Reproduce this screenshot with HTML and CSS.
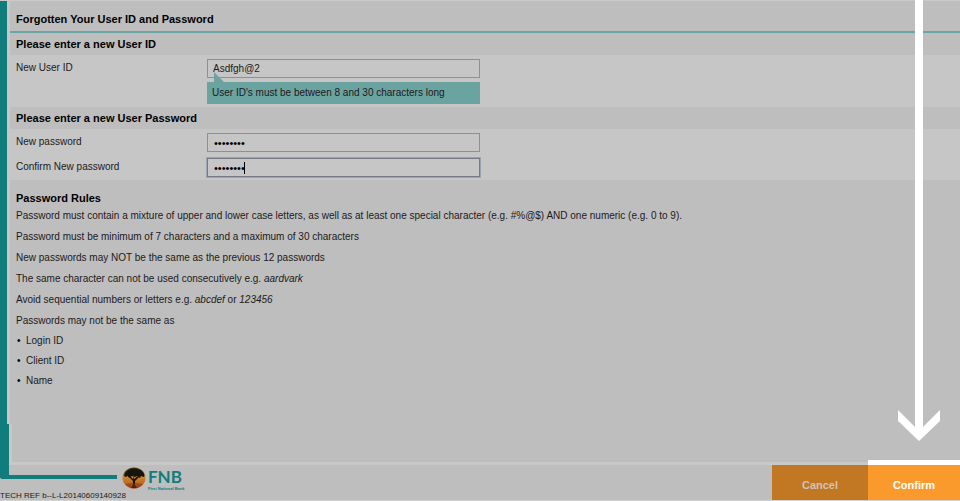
FILE: index.html
```html
<!doctype html>
<html lang="en">
<head>
    <meta charset="UTF-8">
    <meta name="viewport" content="width=device-width, initial-scale=1.0">
    <title>Forgotten Your User ID and Password</title>
    <link rel="stylesheet" href="styles.css">
</head>
<body>
<form class="page">
    <div class="body">
        <div class="rail">
            <div class="rail-top"></div>
            <div class="rail-bottom"></div>
        </div>
        <main class="main">
            <h1 class="title">Forgotten Your User ID and Password</h1>
            <h2 class="heading">Please enter a new User ID</h2>
            <div class="fields">
                <div class="row">
                    <label for="userid">New User ID</label>
                    <div class="control">
                        <input type="text" id="userid" value="Asdfgh@2">
                        <div class="tip">User ID's must be between 8 and 30 characters long</div>
                    </div>
                </div>
            </div>
            <h2 class="heading">Please enter a new User Password</h2>
            <div class="fields">
                <div class="row">
                    <label for="password">New password</label>
                    <div class="control"><input type="password" id="password" value="password"></div>
                </div>
                <div class="row">
                    <label for="confirm">Confirm New password</label>
                    <div class="control active">
                        <input type="password" id="confirm" value="password">
                        <span class="caret"></span>
                    </div>
                </div>
            </div>
            <section class="rules">
                <h3>Password Rules</h3>
                <p>Password must contain a mixture of upper and lower case letters, as well as at least one special character (e.g. #%@$) AND one numeric (e.g. 0 to 9).</p>
                <p>Password must be minimum of 7 characters and a maximum of 30 characters</p>
                <p>New passwords may NOT be the same as the previous 12 passwords</p>
                <p>The same character can not be used consecutively e.g. <em>aardvark</em></p>
                <p>Avoid sequential numbers or letters e.g. <em>abcdef</em> or <em>123456</em></p>
                <p>Passwords may not be the same as</p>
                <ul>
                    <li>Login ID</li>
                    <li>Client ID</li>
                    <li>Name</li>
                </ul>
            </section>
        </main>
    </div>
    <footer class="footer">
        <div class="brand">
            <div class="brand-row">
                <div class="corner"></div>
                <svg class="tree" viewBox="0 0 24 22">
                    <defs>
                        <linearGradient id="sky" x1="0" y1="0" x2="0" y2="1">
                            <stop offset="0" stop-color="#54401c"/>
                            <stop offset=".45" stop-color="#c8892c"/>
                            <stop offset="1" stop-color="#b84f1c"/>
                        </linearGradient>
                    </defs>
                    <ellipse cx="12" cy="11" rx="11.5" ry="10.5" fill="url(#sky)"/>
                    <path d="M2 8C3 5 5 3 8 2C12 0 18 2 20 4C22 6 23 8 22 10L19 9L18 11L15 9L13 10L10 9L7 11L6 9L3 10Z" fill="#17150f"/>
                    <path d="M6 9L11 14L11 18L9 21L15 21L13 18L13 14L18 9L16 9L12 12L12 9L11 12L8 9Z" fill="#17150f"/>
                    <path d="M3 17Q12 15 21 17Q17 21 12 21.500Q7 21 3 17Z" fill="#7d3217" opacity=".5"/>
                </svg>
                <div class="name">
                    <strong>FNB</strong>
                    <small>First National Bank</small>
                </div>
            </div>
            <div class="ref">TECH REF b--L-L20140609140928</div>
        </div>
        <div class="actions">
            <button type="button" class="cancel">Cancel</button>
            <button type="button" class="confirm">Confirm</button>
        </div>
    </footer>
    <div class="arrow">
        <div class="shaft"></div>
        <svg viewBox="0 0 42 31"><path d="M0 0L17 17V0H25V17L42 0V11L21 31L0 11Z" fill="#fff"/></svg>
    </div>
</form>
</body>
</html>
```
FILE: styles.css
```css
* {
    box-sizing: border-box;
}

body {
    margin: 0;
    background: #bebebe;
    color: #1c1a20;
    font: 10px/14px "Liberation Sans", Arial, sans-serif;
}

h1, h2, h3, p, ul {
    margin: 0;
}

.page {
    position: relative;
    display: flex;
    flex-direction: column;
    min-height: 100vh;
    border-top: 1px solid #cacaca;
    border-bottom: 1px solid #d2d2d2;
}

.body {
    display: flex;
    flex: 1;
    border-bottom: 3px solid #c8c8c8;
}

/* teal rail down the left side */
.rail {
    display: flex;
    flex-direction: column;
    width: 10px;
    margin-bottom: -3px;
    background: #c8c8c8;
}

.rail-top {
    flex: 1;
    width: 7px;
    background: #107c7c;
}

.rail-bottom {
    width: 9px;
    height: 41px;
    background: #107c7c;
    box-shadow: 3px 0 #c8c8c8;
}

.main {
    flex: 1;
}

.title {
    height: 32px;
    padding: 10px 6px 0;
    border-bottom: 2px solid #6aa5a3;
    color: #000;
    font-size: 11px;
    line-height: 16px;
}

.heading {
    padding: 3px 6px;
    color: #000;
    font-size: 11px;
    line-height: 16px;
}

.fields {
    display: flex;
    flex-direction: column;
    gap: 6px;
    padding: 4px 6px 3px;
    background: #c6c6c6;
}

.row {
    display: flex;
}

.row label {
    width: 191px;
    padding-top: 2px;
}

.control {
    position: relative;
    width: 273px;
}

.control input {
    display: block;
    width: 100%;
    height: 19px;
    padding: 0 5px;
    border: 1px solid #6f9f9b;
    border-radius: 0;
    outline: 0;
    background: #c6c6c6;
    color: #1c1a20;
    font: inherit;
}

.control input[type="password"] {
    padding: 0 6px;
    color: #000;
    font-size: 11px;
}

.control.active input {
    border-color: #777b83;
    box-shadow: 0 0 0 1px #9aa4b1;
}

.caret {
    position: absolute;
    top: 4px;
    left: 37px;
    width: 1px;
    height: 12px;
    background: #000;
}

.tip {
    position: relative;
    margin-top: 4px;
    padding: 4px 5px;
    background: #6ba3a1;
}

.tip::before {
    content: "";
    position: absolute;
    top: -10px;
    left: 7px;
    border-left: 10px solid #6ba3a1;
    border-top: 10px solid transparent;
}

.rules {
    padding: 11px 6px;
}

.rules h3 {
    color: #000;
    font-size: 11px;
}

.rules p {
    padding: 3px 0;
    line-height: 15px;
}

.rules ul {
    padding-left: 10px;
}

.rules li {
    padding: 3px 0;
}

.rules li::marker {
    content: "•\00a0\00a0";
    color: #000;
}

.footer {
    display: flex;
    justify-content: space-between;
    height: 35px;
}

.brand-row {
    display: flex;
    height: 26px;
}

.corner {
    width: 117px;
    height: 14px;
    border-left: 9px solid #107c7c;
    border-bottom: 4px solid #107c7c;
    border-bottom-left-radius: 3px;
}

.tree {
    width: 24px;
    height: 22px;
    margin: 2px 2px 0 5px;
}

.name {
    color: #107c7c;
}

.name strong {
    display: block;
    padding-top: 2px;
    font: bold 17px/20px Lato, sans-serif;
}

.name small {
    display: block;
    font-size: 4px;
    font-weight: bold;
    line-height: 4px;
}

.ref {
    font-size: 8px;
    line-height: 9px;
}

.actions {
    display: flex;
}

.actions button {
    width: 96px;
    padding: 4px 0 0;
    border: 0;
    font: bold 11px/14px "Liberation Sans", Arial, sans-serif;
}

.actions .cancel {
    background: #c27722;
    color: #d0c4b4;
}

.actions .confirm {
    width: 92px;
    background: #fa9a2c;
    box-shadow: 0 -5px #fff;
    color: #fff;
}

/* pointer to the confirm button */
.arrow {
    position: absolute;
    top: -1px;
    right: 20px;
    bottom: 59px;
    display: flex;
    flex-direction: column;
    align-items: center;
    width: 42px;
    pointer-events: none;
}

.shaft {
    flex: 1;
    width: 8px;
    background: #fff;
}

.arrow svg {
    display: block;
    width: 42px;
    height: 31px;
}
```
